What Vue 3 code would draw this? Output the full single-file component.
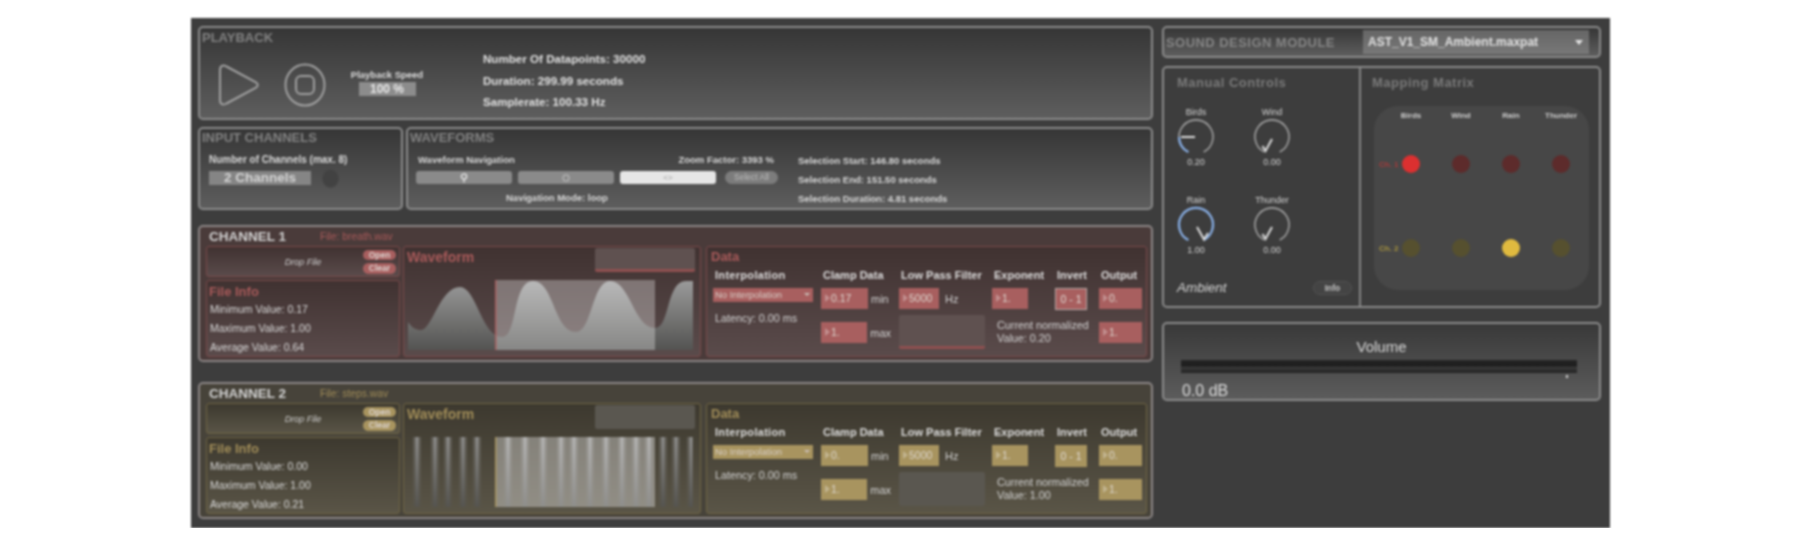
<template>
  <div class="app">
    <div class="left">
      <section class="panel playback">
        <h2 class="panel__title">PLAYBACK</h2>
        <div class="pb-row">
          <svg class="pb-play" width="43" height="44" viewBox="0 0 43 44">
            <path d="M3 7 C3 2.5 6 1.5 9.5 3.5 L38.5 19 C41.5 21 41.5 23 38.5 25 L9.5 40.5 C6 42.5 3 41.5 3 37 Z" fill="none" stroke="#a0a0a0" stroke-width="2" />
          </svg>
          <svg class="pb-stop" width="42" height="44" viewBox="0 0 42 44">
            <ellipse cx="21" cy="22" rx="19.5" ry="20.5" fill="none" stroke="#a0a0a0" stroke-width="2" />
            <rect x="12" y="13" width="18" height="18" rx="5" fill="none" stroke="#a0a0a0" stroke-width="2" />
          </svg>
          <div class="pb-speed">
            <div class="pb-speed__label">Playback Speed</div>
            <div class="pb-speed__box">100 %</div>
          </div>
          <div class="pb-info">
            <div>Number Of Datapoints: 30000</div>
            <div>Duration: 299.99 seconds</div>
            <div>Samplerate: 100.33 Hz</div>
          </div>
        </div>
      </section>

      <div class="row2">
        <section class="panel inputs">
          <h2 class="panel__title">INPUT CHANNELS</h2>
          <div class="inputs__body">
            <div class="small-label inputs__label">Number of Channels (max. 8)</div>
            <div class="inputs__row">
              <div class="inputs__box">2 Channels</div>
              <div class="inputs__dot"></div>
            </div>
          </div>
        </section>
        <section class="panel waves">
          <h2 class="panel__title">WAVEFORMS</h2>
          <div class="waves__body">
            <div class="nav">
              <div class="nav__top small-label">
                <span>Waveform Navigation</span>
                <span>Zoom Factor: 3393 %</span>
              </div>
              <div class="nav__btns">
                <div class="nav__btn">
                  <svg width="8" height="10" viewBox="0 0 8 10"><circle cx="4" cy="3.5" r="2.6" fill="none" stroke="#e6e6e6" stroke-width="1.4" /><path d="M4 6 V9.5" stroke="#e6e6e6" stroke-width="1.4" /></svg>
                </div>
                <div class="nav__btn">
                  <svg width="8" height="8" viewBox="0 0 8 8"><rect x="1" y="1" width="6" height="6" rx="2.5" fill="none" stroke="#c8c8c8" stroke-width="1" /></svg>
                </div>
                <div class="nav__btn nav__btn--on">&lt;&gt;</div>
                <div class="nav__all">Select All</div>
              </div>
              <div class="nav__mode small-label">Navigation Mode: loop</div>
            </div>
            <div class="selection small-label">
              <div>Selection Start: 146.80 seconds</div>
              <div>Selection End: 151.50 seconds</div>
              <div>Selection Duration: 4.81 seconds</div>
            </div>
          </div>
        </section>
      </div>

      <section v-for="ch in channels" :key="ch.id" class="channel" :class="'channel--' + ch.tone">
        <header class="channel__head">
          <span class="channel__name">CHANNEL {{ ch.id }}</span>
          <span class="channel__file">File: {{ ch.file }}</span>
        </header>
        <div class="channel__body">
          <div class="channel__side">
            <div class="drop">
              <span></span>
              <span class="drop__text">Drop File</span>
              <div class="drop__btns">
                <span class="drop__btn">Open</span>
                <span class="drop__btn">Clear</span>
              </div>
            </div>
            <div class="info">
              <div class="sub-title">File Info</div>
              <div class="info__line">Minimum Value: {{ ch.min }}</div>
              <div class="info__line">Maximum Value: {{ ch.max }}</div>
              <div class="info__line">Average Value: {{ ch.avg }}</div>
            </div>
          </div>

          <div class="wave">
            <div class="wave__head">
              <div class="sub-title">Waveform</div>
              <div class="thumb wave__thumb"></div>
            </div>
            <svg class="wave__plot" width="285" height="70" viewBox="0 0 285 70">
              <defs>
                <linearGradient :id="'fill' + ch.id" x1="0" y1="0" x2="0" y2="1">
                  <stop offset="0" stop-color="#9a9a9a" />
                  <stop offset="1" stop-color="#545452" />
                </linearGradient>
              </defs>
              <path v-if="ch.curve" :d="ch.curve" :fill="'url(#fill' + ch.id + ')'" />
              <template v-else>
                <g v-for="x in bars" :key="x" :fill="'url(#fill' + ch.id + ')'">
                  <rect :x="x - 4" y="0" width="8" height="70" opacity="0.3" />
                  <rect :x="x - 1.5" y="0" width="3" height="70" opacity="0.8" />
                </g>
              </template>
              <rect x="87" y="0" width="160" height="70" fill="#fff" :opacity="ch.curve ? 0.3 : 0.34" />
              <rect class="wave__edge" x="87" y="0" width="1.5" height="70" />
            </svg>
          </div>

          <div class="data">
            <div class="sub-title">Data</div>
            <div class="data__cols">
              <div class="col col--interp">
                <div class="col__head">Interpolation</div>
                <div class="menu">No Interpolation<i class="menu__arrow"></i></div>
                <div class="data__note data__note--latency">Latency: 0.00 ms</div>
              </div>
              <div class="col col--clamp">
                <div class="col__head">Clamp Data</div>
                <div class="field"><div class="num num--clamp">{{ ch.clampMin }}</div><span>min</span></div>
                <div class="field field--second"><div class="num num--clamp">1.</div><span>max</span></div>
              </div>
              <div class="col col--filter">
                <div class="col__head">Low Pass Filter</div>
                <div class="field"><div class="num num--filter">5000</div><span>Hz</span></div>
                <div class="thumb filter__thumb"></div>
              </div>
              <div class="col col--expo">
                <div class="expo__row">
                  <div class="expo__item">
                    <div class="col__head">Exponent</div>
                    <div class="num num--expo">1.</div>
                  </div>
                  <div class="expo__item">
                    <div class="col__head col__head--invert">Invert</div>
                    <div class="invert">0 - 1</div>
                  </div>
                </div>
                <div class="data__note data__note--value">Current normalized<br />Value: {{ ch.value }}</div>
              </div>
              <div class="col col--output">
                <div class="col__head">Output</div>
                <div class="num num--output">0.</div>
                <div class="num num--output num--second">1.</div>
              </div>
            </div>
          </div>
        </div>
      </section>
    </div>

    <div class="right">
      <section class="panel module">
        <span class="module__title">SOUND DESIGN MODULE</span>
        <div class="module__select">
          <span>AST_V1_SM_Ambient.maxpat</span>
          <i class="module__arrow"></i>
        </div>
      </section>

      <section class="sound">
        <div class="manual">
          <h3 class="sound__title">Manual Controls</h3>
          <div class="knobs">
            <div v-for="k in knobs" :key="k.name" class="knob">
              <div class="knob__text">{{ k.name }}</div>
              <svg width="40" height="38" viewBox="0 0 40 38">
                <path d="M12.3 34 A17 17 0 1 1 27.7 34" fill="none" stroke="#a0a0a0" stroke-width="1.6" />
                <path v-if="k.arc" :d="k.arc" fill="none" stroke="#86aee6" stroke-width="2.2" />
                <path :d="k.needle" fill="none" stroke="#dcdcdc" stroke-width="2" />
              </svg>
              <div class="knob__text">{{ k.value }}</div>
            </div>
          </div>
          <div class="manual__foot">
            <span class="manual__preset">Ambient</span>
            <span class="manual__info">Info</span>
          </div>
        </div>
        <div class="mapping">
          <h3 class="sound__title">Mapping Matrix</h3>
          <div class="matrix">
            <span></span>
            <span v-for="n in outputs" :key="n" class="matrix__head">{{ n }}</span>
            <template v-for="row in matrix" :key="row.label">
              <span class="matrix__label" :class="'matrix__label--' + row.tone">{{ row.label }}</span>
              <span v-for="(n, i) in outputs" :key="n" class="matrix__cell">
                <i class="dot" :class="['dot--' + row.tone, { 'dot--on': i === row.on }]"></i>
              </span>
            </template>
          </div>
        </div>
      </section>

      <section class="panel volume">
        <div class="volume__title">Volume</div>
        <div class="volume__meter"></div>
        <div class="volume__db">0.0 dB</div>
      </section>
    </div>
  </div>
</template>

<script setup>
const bars = [9, 27, 40, 55, 69, 100, 117, 135, 153, 166, 182, 198, 214, 228, 241, 255, 268, 283]

const channels = [
  {
    id: 1,
    tone: 'red',
    file: 'breath.wav',
    min: '0.17',
    max: '1.00',
    avg: '0.64',
    clampMin: '0.17',
    value: '0.20',
    curve: 'M0 42 C4 48 8 50 13 50 C24 50 32 7 52 7 C68 7 74 57 94 57 C110 57 104 1 125 1 C146 1 146 52 168 52 C184 52 184 1 202 1 C222 1 226 48 247 48 C262 48 258 1 278 1 L285 1 L285 70 L0 70 Z',
  },
  {
    id: 2,
    tone: 'yellow',
    file: 'steps.wav',
    min: '0.00',
    max: '1.00',
    avg: '0.21',
    clampMin: '0.',
    value: '1.00',
    curve: null,
  },
]

const knobs = [
  { name: 'Birds', value: '0.20', arc: 'M12.3 34 A17 17 0 0 1 3 19', needle: 'M19 19 H5' },
  { name: 'Wind', value: '0.00', arc: null, needle: 'M20 21 L13.5 33 L10.5 28' },
  { name: 'Rain', value: '1.00', arc: 'M12.3 34 A17 17 0 1 1 27.7 34', needle: 'M21 21 L28 33.5 L32 27' },
  { name: 'Thunder', value: '0.00', arc: null, needle: 'M20 21 L13.5 33 L10.5 28' },
]

const outputs = ['Birds', 'Wind', 'Rain', 'Thunder']

const matrix = [
  { label: 'Ch. 1', tone: 'red', on: 0 },
  { label: 'Ch. 2', tone: 'yellow', on: 2 },
]
</script>

<style scoped>
.app {
  display: flex;
  gap: 9px;
  box-sizing: border-box;
  width: 1419px;
  height: 510px;
  margin: 18px 0 0 191px;
  padding: 8px 0 0 7px;
  background: #3d3d3d;
  color: #dcdcdc;
  font-family: "Liberation Sans", Arial, sans-serif;
  filter: blur(0.9px);
}

.left {
  display: flex;
  flex-direction: column;
  width: 955px;
  flex-shrink: 0;
}

.left > * {
  flex-shrink: 0;
}

.right {
  display: flex;
  flex-direction: column;
  width: 439px;
  flex-shrink: 0;
}

.panel {
  box-sizing: border-box;
  border: 2px solid #8b8b8b;
  border-radius: 5px;
  background: linear-gradient(180deg, #363636 0%, #5e5e5e 100%);
}

.panel__title {
  margin: 0;
  font-size: 13px;
  line-height: 16px;
  font-weight: 700;
  color: #828282;
}

.small-label {
  font-size: 9.5px;
  line-height: 12px;
  font-weight: 700;
  color: #d8d8d8;
}

/* Playback */
.playback {
  height: 94px;
  padding: 2px 2px 0;
}

.pb-row {
  display: flex;
  align-items: flex-start;
  margin-top: 2px;
  padding-left: 15px;
}

.pb-play {
  margin-top: 15px;
}

.pb-stop {
  margin: 15px 0 0 24px;
}

.pb-speed {
  width: 74px;
  margin: 21px 0 0 24px;
  text-align: center;
}

.pb-speed__label {
  font-size: 9.5px;
  line-height: 11px;
  font-weight: 700;
  white-space: nowrap;
}

.pb-speed__box {
  width: 57px;
  height: 14px;
  margin: 2px auto 0;
  background: #8c8c8c;
  font-size: 12px;
  line-height: 14px;
  font-weight: 700;
  color: #e8e8e8;
}

.pb-info {
  margin-left: 59px;
  font-size: 11.6px;
  line-height: 21.5px;
  font-weight: 700;
  color: #e0e0e0;
  white-space: nowrap;
}

/* Input channels + waveforms row */
.row2 {
  display: flex;
  gap: 3px;
  height: 83px;
  margin: 7px 0 15px;
}

.inputs {
  width: 205px;
  padding: 1px 2px 0;
}

.inputs__body {
  margin-top: 8px;
  padding-left: 7px;
}

.inputs__label {
  font-size: 10px;
  white-space: nowrap;
}

.inputs__row {
  display: flex;
  align-items: center;
  gap: 11px;
  height: 14px;
  margin-top: 5px;
}

.inputs__box {
  width: 102px;
  height: 14px;
  background: #858585;
  font-size: 13.5px;
  line-height: 14px;
  font-weight: 700;
  text-align: center;
  color: #d4d4d4;
}

.inputs__dot {
  box-sizing: border-box;
  width: 17px;
  height: 19px;
  flex-shrink: 0;
  border-radius: 50%;
  border: 1px solid #484848;
  background: #424242;
}

.waves {
  flex: 1;
  padding: 1px 2px 0;
}

.waves__body {
  display: flex;
  padding-left: 6px;
}

.nav {
  width: 363px;
  margin-top: 8px;
}

.nav__top {
  display: flex;
  justify-content: space-between;
  padding: 0 5px 0 2px;
}

.nav__btns {
  display: flex;
  align-items: center;
  gap: 6px;
  height: 13px;
  margin-top: 5px;
}

.nav__btn {
  display: flex;
  align-items: center;
  justify-content: center;
  width: 96px;
  height: 13px;
  border-radius: 3px;
  background: #8a8a8a;
  font-size: 8px;
  color: #9c9c9c;
}

.nav__btn--on {
  background: #e6e6e6;
}

.nav__all {
  width: 53px;
  height: 13px;
  margin-left: 3px;
  border-radius: 7px;
  background: #7c7c7c;
  font-size: 8.5px;
  line-height: 13px;
  text-align: center;
  color: #bcbcbc;
}

.nav__mode {
  margin: 8px 0 0 90px;
}

.selection {
  margin: 5px 0 0 19px;
  line-height: 19px;
  white-space: nowrap;
}

/* Channel strips */
.channel {
  --accent: #a85f5f;
  --accent-text: #a85a5a;
  --frame: #7a4a4a;
  --top: #403231;
  --bottom: #5a4b4b;
  --thumb: #5f5150;
  --outer: #4a3b3a;
  box-sizing: border-box;
  height: 137px;
  margin-bottom: 20px;
  padding: 0 0 0 6px;
  border: 2px solid #8c8686;
  border-radius: 5px;
  background: var(--outer);
}

.channel:last-child {
  margin-bottom: 0;
}

.channel--yellow {
  --accent: #a8945f;
  --accent-text: #a08c58;
  --frame: #6f6544;
  --top: #3d392f;
  --bottom: #5a5547;
  --thumb: #5a5750;
  --outer: #47433a;
}

.channel__head {
  display: flex;
  align-items: center;
  height: 19px;
  padding-left: 3px;
}

.channel__name {
  width: 111px;
  font-size: 13.5px;
  font-weight: 700;
  color: #d2d2d2;
}

.channel__file {
  font-size: 10.3px;
  color: var(--accent-text);
}

.channel__body {
  display: grid;
  grid-template-columns: 194px 298px 443px;
  column-gap: 3px;
  height: 111px;
}

.channel__side {
  display: flex;
  flex-direction: column;
  gap: 3px;
}

.drop,
.info,
.wave,
.data {
  box-sizing: border-box;
  border: 1px solid var(--frame);
  border-radius: 3px;
  background: linear-gradient(180deg, var(--top) 0%, var(--bottom) 100%);
}

.drop {
  display: grid;
  grid-template-columns: 1fr auto 1fr;
  align-items: center;
  height: 31px;
}

.drop__text {
  font-size: 9px;
  font-style: italic;
  color: #cfcfcf;
}

.drop__btns {
  display: flex;
  flex-direction: column;
  gap: 3px;
  justify-self: end;
  margin-right: 3px;
}

.drop__btn {
  width: 33px;
  height: 10.5px;
  border-radius: 6px;
  background: var(--accent);
  font-size: 8.5px;
  line-height: 10.5px;
  font-weight: 700;
  text-align: center;
  color: #dbd3cf;
}

.sub-title {
  font-size: 13px;
  line-height: 16px;
  font-weight: 700;
  color: var(--accent-text);
}

.info {
  height: 77px;
  padding: 3px 0 0 2px;
}

.info__line {
  padding-left: 1px;
  font-size: 10.5px;
  line-height: 18.8px;
  color: #d8d8d8;
}

.wave {
  padding: 1px 5px 0 3px;
}

.wave__head {
  display: flex;
  justify-content: space-between;
  height: 24px;
  margin-bottom: 8px;
}

.wave__head .sub-title {
  font-size: 14px;
  line-height: 18px;
}

.thumb {
  box-sizing: border-box;
  border-radius: 2px;
  background: var(--thumb);
}

.channel--red .thumb {
  border-bottom: 3px solid #8f5050;
}

.wave__thumb {
  width: 100px;
  height: 24px;
}

.wave__plot {
  display: block;
  margin-left: 1px;
}

.wave__edge {
  fill: var(--accent);
}

.data {
  margin-left: 2px;
  padding: 1px 0 0 4px;
}

.data .sub-title {
  line-height: 18px;
}

.data__cols {
  display: flex;
  margin-left: 2px;
}

.col__head {
  height: 22px;
  padding-left: 2px;
  font-size: 11px;
  line-height: 18px;
  font-weight: 700;
  color: #dcdcdc;
  white-space: nowrap;
}

.col--interp {
  width: 100px;
  margin-right: 8px;
}

.col--interp .col__head {
  letter-spacing: 0.3px;
}

.col--clamp {
  width: 70px;
  margin-right: 8px;
}

.col--filter {
  width: 86px;
  margin-right: 7px;
}

.col--expo {
  width: 95px;
  margin-right: 12px;
}

.col--output {
  width: 43px;
}

.menu {
  position: relative;
  height: 14px;
  padding-left: 2px;
  background: var(--accent);
  font-size: 9.5px;
  line-height: 14px;
  color: #d8cfc8;
  white-space: nowrap;
}

.menu__arrow {
  position: absolute;
  right: 3px;
  top: 5px;
  border: 3px solid transparent;
  border-top-color: #c9bdb6;
}

.data__note {
  font-size: 10.8px;
  line-height: 13px;
  color: #d2d2d2;
  white-space: nowrap;
}

.data__note--latency {
  margin: 10px 0 0 2px;
}

.data__note--value {
  margin: 9px 0 0 5px;
}

.field {
  display: flex;
  align-items: center;
  gap: 3px;
  font-size: 11px;
  color: #d2d2d2;
}

.field--second {
  margin-top: 13px;
}

.num {
  position: relative;
  box-sizing: border-box;
  height: 21px;
  padding-left: 10px;
  background: var(--accent);
  font-size: 10.5px;
  line-height: 21px;
  color: #ded8d0;
}

.num::before {
  content: "";
  position: absolute;
  left: 4px;
  top: 6px;
  border: 4px solid transparent;
  border-left: 5px solid rgba(255, 255, 255, 0.3);
  border-right: 0;
}

.num--second {
  margin-top: 13px;
}

.num--clamp {
  width: 47px;
}

.num--filter {
  width: 40px;
}

.field .num--filter + span {
  margin-left: 3px;
}

.num--expo {
  width: 36px;
}

.num--output {
  width: 43px;
}

.filter__thumb {
  width: 86px;
  height: 34px;
  margin-top: 6px;
}

.expo__row {
  display: flex;
  gap: 27px;
}

.expo__item {
  width: 36px;
}

.expo__item:last-child {
  width: 32px;
}

.col__head--invert {
  padding-left: 2px;
}

.invert {
  box-sizing: border-box;
  height: 22px;
  border: 1px solid var(--accent);
  background: var(--accent);
  font-size: 10.5px;
  line-height: 20px;
  text-align: center;
  color: #e0dad4;
}

.channel--red .invert {
  border-color: #b8aaa8;
}

/* Sound design side */
.module {
  display: flex;
  align-items: center;
  justify-content: space-between;
  height: 32px;
  margin-bottom: 8px;
  padding: 0 10px 0 2px;
}

.module__title {
  font-size: 13px;
  font-weight: 700;
  letter-spacing: 0.45px;
  color: #868686;
}

.module__select {
  display: flex;
  align-items: center;
  justify-content: space-between;
  box-sizing: border-box;
  width: 226px;
  height: 24px;
  padding: 0 6px 0 5px;
  background: linear-gradient(180deg, #666, #787878);
  font-size: 12px;
  font-weight: 700;
  color: #e2e2e2;
}

.module__arrow {
  margin-top: 4px;
  border: 4px solid transparent;
  border-top: 5px solid #e2e2e2;
}

.sound {
  display: flex;
  box-sizing: border-box;
  height: 242px;
  margin-bottom: 14px;
  border: 2px solid #8b8b8b;
  border-radius: 5px;
}

.sound__title {
  margin: 0;
  font-size: 13px;
  line-height: 16px;
  font-weight: 700;
  letter-spacing: 0.5px;
  color: #7a7a7a;
}

.manual {
  box-sizing: border-box;
  width: 197px;
  padding-top: 7px;
  border-right: 2px solid #858585;
}

.manual .sound__title {
  padding-left: 13px;
}

.knobs {
  display: grid;
  grid-template-columns: 52px 52px;
  column-gap: 24px;
  row-gap: 26px;
  margin: 15px 0 0 6px;
}

.knob {
  display: flex;
  flex-direction: column;
  align-items: center;
}

.knob__text {
  font-size: 9px;
  line-height: 12px;
  color: #d4d4d4;
}

.manual__foot {
  display: flex;
  align-items: center;
  justify-content: space-between;
  margin-top: 24px;
  padding: 0 7px 0 13px;
}

.manual__preset {
  font-size: 13.5px;
  font-style: italic;
  line-height: 16px;
  color: #d6d6d6;
}

.manual__info {
  box-sizing: border-box;
  width: 39px;
  height: 14px;
  border: 1px solid #525252;
  border-radius: 7px;
  background: #444;
  font-size: 8.5px;
  line-height: 12px;
  font-weight: 700;
  text-align: center;
  color: #c4c4c4;
}

.mapping {
  flex: 1;
  padding: 7px 0 0 11px;
}

.matrix {
  display: grid;
  grid-template-columns: 0 repeat(4, 50px);
  grid-template-rows: 13px 84px 84px;
  box-sizing: border-box;
  width: 215px;
  height: 184px;
  margin: 15px 0 0 2px;
  padding: 3px 0 0 12px;
  border-radius: 24px;
  background: #474747;
}

.matrix__head {
  font-size: 8px;
  line-height: 13px;
  font-weight: 700;
  text-align: center;
  color: #cfcfcf;
}

.matrix__label {
  align-self: center;
  margin-left: -7px;
  font-size: 8px;
  font-weight: 700;
  white-space: nowrap;
}

.matrix__label--red {
  color: #a93a3a;
}

.matrix__label--yellow {
  color: #a8943e;
}

.matrix__cell {
  display: flex;
  align-items: center;
  justify-content: center;
}

.dot {
  width: 18px;
  height: 18px;
  border-radius: 50%;
}

.dot--red {
  background: #5d2b2b;
}

.dot--red.dot--on {
  background: #dc3030;
}

.dot--yellow {
  background: #56502f;
}

.dot--yellow.dot--on {
  background: #e0ba3f;
}

.volume {
  height: 79px;
  padding-top: 14px;
  background: linear-gradient(180deg, #393939 0%, #5c5c5c 100%);
}

.volume__title {
  font-size: 15px;
  line-height: 18px;
  text-align: center;
  color: #d8d8d8;
}

.volume__meter {
  position: relative;
  width: 396px;
  height: 13px;
  margin: 4px 0 0 17px;
  background: linear-gradient(180deg, #262626 0%, #1c1c1c 45%, #3a3a3a 55%, #222 100%);
}

.volume__meter::after {
  content: "";
  position: absolute;
  right: 9px;
  top: 15px;
  width: 2px;
  height: 3px;
  background: #d0d0d0;
}

.volume__db {
  margin: 9px 0 0 18px;
  font-size: 16px;
  line-height: 17px;
  color: #dcdcdc;
}
</style>
